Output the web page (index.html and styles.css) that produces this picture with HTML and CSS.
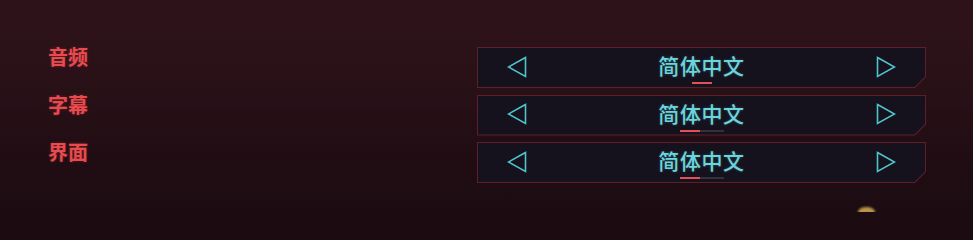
FILE: index.html
```html
<!DOCTYPE html>
<html lang="zh-CN">
<head>
<meta charset="utf-8">
<title>语言设置</title>
<link rel="stylesheet" href="styles.css">
</head>
<body>
<div class="screen">
  <div class="rows">
    <div class="row">
      <div class="label">音频</div>
      <div class="field">
        <div class="field-inner">
          <svg class="arrow" width="20" height="22" viewBox="0 0 20 22"><path d="M18.5 1.5 L1.5 11 L18.5 20.5 Z" fill="none" stroke="#4ec4cb" stroke-width="1.6" stroke-linejoin="miter"/></svg>
          <div class="value">
            <div class="value-text">简体中文</div>
            <div class="track track-hidden"><div class="bar" style="margin-left:12px"></div></div>
          </div>
          <svg class="arrow" width="20" height="22" viewBox="0 0 20 22"><path d="M1.5 1.5 L18.5 11 L1.5 20.5 Z" fill="none" stroke="#4ec4cb" stroke-width="1.6" stroke-linejoin="miter"/></svg>
        </div>
      </div>
    </div>
    <div class="row">
      <div class="label">字幕</div>
      <div class="field">
        <div class="field-inner">
          <svg class="arrow" width="20" height="22" viewBox="0 0 20 22"><path d="M18.5 1.5 L1.5 11 L18.5 20.5 Z" fill="none" stroke="#4ec4cb" stroke-width="1.6" stroke-linejoin="miter"/></svg>
          <div class="value">
            <div class="value-text">简体中文</div>
            <div class="track"><div class="bar" style="margin-left:0px"></div></div>
          </div>
          <svg class="arrow" width="20" height="22" viewBox="0 0 20 22"><path d="M1.5 1.5 L18.5 11 L1.5 20.5 Z" fill="none" stroke="#4ec4cb" stroke-width="1.6" stroke-linejoin="miter"/></svg>
        </div>
      </div>
    </div>
    <div class="row">
      <div class="label">界面</div>
      <div class="field">
        <div class="field-inner">
          <svg class="arrow" width="20" height="22" viewBox="0 0 20 22"><path d="M18.5 1.5 L1.5 11 L18.5 20.5 Z" fill="none" stroke="#4ec4cb" stroke-width="1.6" stroke-linejoin="miter"/></svg>
          <div class="value">
            <div class="value-text">简体中文</div>
            <div class="track"><div class="bar" style="margin-left:0px"></div></div>
          </div>
          <svg class="arrow" width="20" height="22" viewBox="0 0 20 22"><path d="M1.5 1.5 L18.5 11 L1.5 20.5 Z" fill="none" stroke="#4ec4cb" stroke-width="1.6" stroke-linejoin="miter"/></svg>
        </div>
      </div>
    </div>
  </div>
  <div class="cursor-glow"></div>
</div>
</body>
</html>
```
FILE: styles.css
```css
html, body {
  margin: 0;
  padding: 0;
  width: 973px;
  height: 212px;
  overflow: hidden;
}
body {
  background: #1c0c12;
  font-family: "Noto Sans CJK SC", "Noto Sans", sans-serif;
}
.screen {
  position: relative;
  width: 973px;
  height: 212px;
  background: linear-gradient(180deg, #2e1219 0%, #2a1118 35%, #200d13 75%, #1c0c12 100%);
  box-sizing: border-box;
  padding: 47px 0 0 48px;
}
.rows {
  display: flex;
  flex-direction: column;
  gap: 6.5px;
}
.row {
  display: flex;
  align-items: flex-start;
}
.label {
  width: 429px;
  font-size: 20px;
  line-height: 20px;
  font-weight: 700;
  color: #e84a4e;
  text-shadow: 0 0 3px rgba(232, 74, 78, 0.35);
}
.field {
  width: 449px;
  height: 41px;
  box-sizing: border-box;
  padding: 1px;
  background: #5e1f2a;
  clip-path: polygon(0 0, 100% 0, 100% calc(100% - 11px), calc(100% - 11px) 100%, 0 100%);
}
.field-inner {
  height: 100%;
  box-sizing: border-box;
  background: #15111d;
  clip-path: polygon(0 0, 100% 0, 100% calc(100% - 10.4px), calc(100% - 10.4px) 100%, 0 100%);
  display: flex;
  align-items: center;
  justify-content: space-between;
  padding: 0 29px 0 29px;
}
.arrow {
  display: block;
  margin-top: -2px;
}
.value {
  align-self: stretch;
  display: flex;
  flex-direction: column;
  align-items: center;
  padding-top: 5px;
}
.value-text {
  font-size: 21px;
  line-height: 24px;
  font-weight: 500;
  color: #6ad5dc;
  letter-spacing: 0.6px;
  text-shadow: 0 0 3px rgba(106, 213, 220, 0.3);
}
.track {
  margin-top: 5px;
  width: 44px;
  height: 2px;
  background: #35303b;
  display: flex;
}
.track-hidden {
  background: transparent;
}
.bar {
  width: 20px;
  height: 2px;
  background: #e05258;
}
.cursor-glow {
  position: absolute;
  left: 858px;
  top: 207px;
  width: 17px;
  height: 10px;
  border-radius: 50% 50% 0 0;
  background: #b89448;
  filter: blur(1px);
}
```
